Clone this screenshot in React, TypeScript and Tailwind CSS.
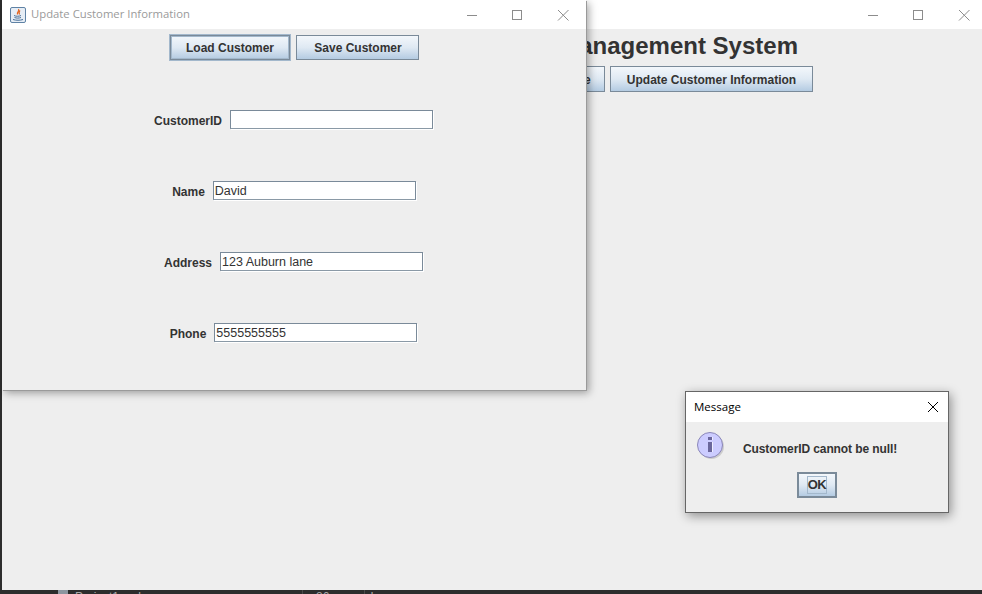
import type { ReactNode } from "react";

const sans = "font-['Liberation_Sans',Arial,sans-serif]";

function SwingButton({ children, focused, className }: { children: ReactNode; focused?: boolean; className?: string }) {
  return (
    <button
      className={`flex items-center justify-center border border-[#7a8a99] bg-gradient-to-b from-[#f3f7fb] via-[#dfe9f3] to-[#b4cbe2] text-xs font-bold text-[#333333] ${className ?? ""} ${
        focused ? "shadow-[inset_0_0_0_1px_#a3b8cc] outline outline-1 outline-[#a3b8cc]" : ""
      }`}
    >
      {children}
    </button>
  );
}

function Field({ label, value, className }: { label: string; value: string; className?: string }) {
  return (
    <div className={`flex h-[19px] items-center justify-center gap-[8px] ${className ?? ""}`}>
      <span className="pt-[2px] text-xs font-bold text-[#333333]">{label}</span>
      <div className="flex h-[19px] w-[203px] items-center border border-[#7a8a99] border-b-[#8a99a6] bg-white pt-[2px] pl-[1px] text-[12.5px] text-[#333333] shadow-[1px_1px_0_#ffffff]">
        {value}
      </div>
    </div>
  );
}

function WinControls({ color }: { color: string }) {
  return (
    <div className="flex items-center gap-[29px]">
      <svg width="16" height="16" viewBox="0 0 16 16" fill="none" stroke={color}>
        <path d="M3 8.5h10" />
      </svg>
      <svg width="16" height="16" viewBox="0 0 16 16" fill="none" stroke={color}>
        <rect x="3.5" y="3.5" width="9" height="9" />
      </svg>
      <svg width="16" height="16" viewBox="0 0 16 16" fill="none" stroke={color}>
        <path d="M4 3l10.5 10.5M14.5 3L4 13.5" />
      </svg>
    </div>
  );
}

function JavaIcon() {
  return (
    <svg width="16" height="16" viewBox="0 0 16 16" fill="none">
      <rect x="0.5" y="0.5" width="15" height="15" rx="1.5" fill="#e6edf5" stroke="#5f82a5" />
      <path d="M8.5 2C10 4 6.5 5 7.5 7.5M10 3.5C9 5 8.5 5.5 9.5 7.5" stroke="#e2641f" strokeWidth="1.2" />
      <path d="M4 8.5c2 1 5 1 7 0M4.5 10.5c2 .8 4.5 .8 6.5 0M3 12.5c3 1 7 1 10 0" stroke="#4a7199" strokeWidth="1" />
    </svg>
  );
}

function InfoIcon() {
  return (
    <svg width="28" height="28" viewBox="0 0 28 28">
      <circle cx="14.5" cy="14.5" r="12.5" fill="#000000" opacity="0.14" />
      <circle cx="13" cy="13" r="12.5" fill="#ccccff" stroke="#8a86b8" />
      <rect x="11" y="5" width="4" height="3" fill="#6a669c" />
      <rect x="11" y="10" width="4" height="10" fill="#6a669c" />
      <path d="M15.5 5v3M15.5 10v10" stroke="#eeeeff" />
    </svg>
  );
}

export default function App() {
  return (
    <div className={`relative h-[594px] w-[982px] overflow-hidden bg-[#2d2d2d] ${sans}`}>
      {/* main window, behind */}
      <div className="ml-[2px] flex h-[590px] flex-col bg-[#eeeeee]">
        <div className="flex h-[29px] items-center justify-end bg-white pr-[11px]">
          <WinControls color="#8c8c8c" />
        </div>
        <div className="flex justify-end pr-[184px] pt-[3px]">
          <h1 className="text-2xl leading-[28px] font-bold whitespace-nowrap text-[#333333]">Customer Management System</h1>
        </div>
        <div className="flex justify-end gap-[5px] pr-[169px] pt-[6px]">
          <SwingButton className="h-[26px] w-[140px] pt-[1px] pr-[12px]">Add Customer Profile</SwingButton>
          <SwingButton className="h-[26px] w-[203px] pt-[1px]">Update Customer Information</SwingButton>
        </div>
      </div>

      {/* taskbar strip peeking out under the main window */}
      <div className="flex h-[4px] items-start overflow-hidden text-xs leading-[14px] text-[#a8a8a8]">
        <div className="ml-[58px] h-[4px] w-[10px] bg-[#8d96a0]" />
        <span className="ml-[7px]">Project1.vml</span>
        <div className="ml-[161px] h-[4px] w-[1px] bg-[#4a4a4a]" />
        <span className="ml-[13px]">86</span>
        <div className="ml-[35px] h-[4px] w-[1px] bg-[#4a4a4a]" />
        <span className="ml-[5px]">Lever</span>
      </div>

      {/* update customer window */}
      <div className="absolute left-[2px] top-0 flex h-[390px] w-[584px] flex-col bg-[#eeeeee] shadow-[1px_1px_0_#9a9a9a,3px_3px_8px_rgba(0,0,0,0.35)]">
        <div className="flex h-[29px] items-center justify-between bg-white pl-[8px] pr-[16px]">
          <div className="flex items-center gap-[5px] font-['Open_Sans',sans-serif] text-[11.3px] text-[#9a9a9a]">
            <JavaIcon />
            <span>Update Customer Information</span>
          </div>
          <WinControls color="#8c8c8c" />
        </div>
        <div className="flex justify-center gap-[6px] pt-[6px]">
          <SwingButton focused className="h-[25px] w-[120px] pl-[1px]">
            Load Customer
          </SwingButton>
          <SwingButton className="h-[25px] w-[123px] pl-[2px]">Save Customer</SwingButton>
        </div>
        <div className="flex flex-col gap-[52px] pt-[50px]">
          <Field label="CustomerID" value="" className="pr-[1px]" />
          <Field label="Name" value="David" />
          <Field label="Address" value="123 Auburn lane" className="pr-[1px]" />
          <Field label="Phone" value="5555555555" className="pr-[1px]" />
        </div>
      </div>

      {/* message dialog */}
      <div className="absolute left-[685px] top-[391px] flex h-[122px] w-[264px] flex-col border border-[#666666] bg-[#eeeeee] shadow-[2px_3px_10px_rgba(0,0,0,0.4)]">
        <div className="flex h-[30px] items-center justify-between bg-white pl-[8px] pr-[7px] font-['Open_Sans',sans-serif] text-[11.5px] text-black">
          <span>Message</span>
          <svg width="16" height="16" viewBox="0 0 16 16" fill="none" stroke="#000000">
            <path d="M3 3l10 10M13 3L3 13" />
          </svg>
        </div>
        <div className="flex h-[42px] items-start pl-[11px] pt-[10px]">
          <InfoIcon />
          <span className="ml-[18px] mt-[9px] text-xs font-bold tracking-[-0.1px] text-[#333333]">CustomerID cannot be null!</span>
        </div>
        <div className="flex justify-center pt-[8px]">
          <SwingButton className="h-[26px] w-[40px] border-2 text-[13px]">
            <span className="flex h-[18px] w-[20px] items-center justify-center border border-[#a3b8cc] tracking-[-0.5px]">OK</span>
          </SwingButton>
        </div>
      </div>
    </div>
  );
}
